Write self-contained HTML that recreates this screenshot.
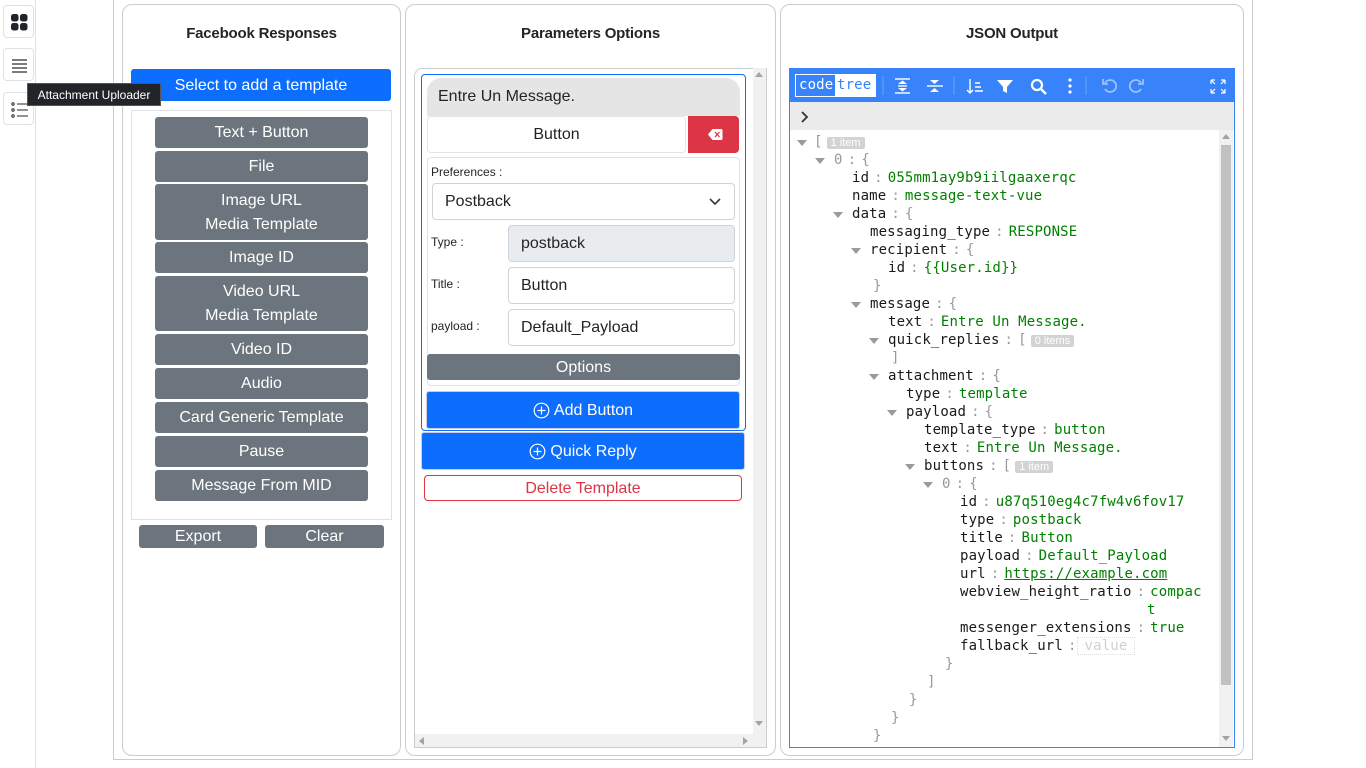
<!DOCTYPE html>
<html><head><meta charset="utf-8"><style>
*{box-sizing:border-box;margin:0;padding:0}
body{width:1366px;height:768px;background:#fff;font-family:"Liberation Sans",sans-serif;position:relative;overflow:hidden;color:#212529}
.a{position:absolute}
.side{left:0;top:0;width:36px;height:768px;border-right:1px solid #dee2e6}
.sb{left:3px;width:31px;height:33px;border:1px solid #dee2e6;border-radius:4px;background:#fff}
.panel{border:1px solid #ccc;border-radius:10px;top:4px;height:752px}
.h{font-weight:bold;font-size:15px;text-align:center;width:100%;top:20px;letter-spacing:-0.2px}
.gb{background:#6c757d;color:#fff;border-radius:3px;font-size:16px;text-align:center;display:flex;align-items:center;justify-content:center;flex-direction:column;line-height:24px;padding-top:1px}
.bb{background:#0d6efd;color:#fff;border-radius:3px;font-size:16px;display:flex;align-items:center;justify-content:center;padding-top:1px}
.in{border:1px solid #ced4da;border-radius:4px;font-size:16px;padding-left:12px;display:flex;align-items:center;background:#fff;padding-top:1px}
.lb{font-size:12px}
.j{font-family:"DejaVu Sans Mono",monospace;font-size:14px;line-height:18px;height:18px;white-space:pre;letter-spacing:0.15px}
.k{color:#1a1a1a}.v{color:#008000}.c{color:#999;padding:0 5px}.g{color:#999}
.t{display:inline-block;width:0;height:0;border-left:5px solid transparent;border-right:5px solid transparent;border-top:6px solid #9a9a9a}
.badge{background:#d3d3d3;color:#fff;font-family:"Liberation Sans",sans-serif;font-size:11px;padding:0 4px;border-radius:2px;margin-left:4px;letter-spacing:0}
</style></head><body>
<div class="a side"></div>
<div class="a sb" style="top:5px"><svg width="31" height="33" viewBox="0 0 31 33"><rect x="7" y="8" width="7.5" height="7.5" rx="2.5" fill="#212529"/><rect x="16" y="8" width="7.5" height="7.5" rx="2.5" fill="#212529"/><rect x="7" y="17" width="7.5" height="7.5" rx="2.5" fill="#212529"/><rect x="16" y="17" width="7.5" height="7.5" rx="2.5" fill="#212529"/></svg></div>
<div class="a sb" style="top:48px"><svg width="31" height="33"><g stroke="#212529" stroke-width="1.2"><line x1="8" y1="11" x2="23" y2="11"/><line x1="8" y1="15" x2="23" y2="15"/><line x1="8" y1="19" x2="23" y2="19"/><line x1="8" y1="23" x2="23" y2="23"/></g></svg></div>
<div class="a sb" style="top:92px"><svg width="31" height="33"><g stroke="#212529" stroke-width="1" fill="none"><circle cx="9" cy="11" r="1.2"/><circle cx="9" cy="17" r="1.2"/><circle cx="9" cy="23" r="1.2"/><line x1="13" y1="11" x2="24" y2="11"/><line x1="13" y1="17" x2="24" y2="17"/><line x1="13" y1="23" x2="24" y2="23"/></g></svg></div>
<div class="a" style="left:113px;top:0;width:1140px;height:760px;border:1px solid #ccc;border-top:none"></div>

<!-- left panel -->
<div class="a panel" style="left:122px;width:279px"><div class="a h">Facebook Responses</div></div>
<div class="a bb" style="left:131px;top:69px;width:260px;height:32px">Select to add a template</div>
<div class="a" style="left:131px;top:110px;width:261px;height:410px;border:1px solid #dee2e6"></div>
<div class="a gb" style="left:155px;top:117px;width:213px;height:31px">Text + Button</div>
<div class="a gb" style="left:155px;top:151px;width:213px;height:31px">File</div>
<div class="a gb" style="left:155px;top:184px;width:213px;height:56px">Image URL<br>Media Template</div>
<div class="a gb" style="left:155px;top:242px;width:213px;height:31px">Image ID</div>
<div class="a gb" style="left:155px;top:276px;width:213px;height:55px">Video URL<br>Media Template</div>
<div class="a gb" style="left:155px;top:334px;width:213px;height:31px">Video ID</div>
<div class="a gb" style="left:155px;top:368px;width:213px;height:31px">Audio</div>
<div class="a gb" style="left:155px;top:402px;width:213px;height:31px">Card Generic Template</div>
<div class="a gb" style="left:155px;top:436px;width:213px;height:31px">Pause</div>
<div class="a gb" style="left:155px;top:470px;width:213px;height:31px">Message From MID</div>
<div class="a gb" style="left:139px;top:525px;width:118px;height:23px">Export</div>
<div class="a gb" style="left:265px;top:525px;width:119px;height:23px">Clear</div>

<!-- middle panel -->
<div class="a panel" style="left:405px;width:371px"><div class="a h">Parameters Options</div></div>
<div class="a" style="left:414px;top:68px;width:353px;height:680px;border:1px solid #ccc;border-radius:8px 0 0 0"></div>
<div class="a" style="left:753px;top:68px;width:13px;height:679px;background:#f1f1f1"></div>
<div class="a" style="left:755px;top:72px;border-left:4px solid transparent;border-right:4px solid transparent;border-bottom:5px solid #a3a3a3"></div>
<div class="a" style="left:755px;top:721px;border-left:4px solid transparent;border-right:4px solid transparent;border-top:5px solid #a3a3a3"></div>
<div class="a" style="left:415px;top:734px;width:338px;height:13px;background:#f1f1f1"></div>
<div class="a" style="left:419px;top:737px;border-top:4px solid transparent;border-bottom:4px solid transparent;border-right:5px solid #a3a3a3"></div>
<div class="a" style="left:743px;top:737px;border-top:4px solid transparent;border-bottom:4px solid transparent;border-left:5px solid #a3a3a3"></div>
<div class="a" style="left:421px;top:74px;width:325px;height:357px;border:1px solid #0d6efd;border-radius:4px"></div>
<div class="a" style="left:427px;top:78px;width:313px;height:38px;background:#e5e5e5;border-radius:14px 14px 0 0;font-size:16px;padding:10px 0 0 11px">Entre Un Message.</div>
<div class="a in" style="left:427px;top:116px;width:259px;height:37px;justify-content:center;padding:0;border-color:#e5e5e5">Button</div>
<div class="a" style="left:688px;top:116px;width:51px;height:37px;background:#dc3545;border-radius:0 4px 4px 0"><svg width="51" height="37"><path d="M20 18.5 L24.5 13 H33 a1.5 1.5 0 0 1 1.5 1.5 V22.5 a1.5 1.5 0 0 1 -1.5 1.5 H24.5 Z" fill="#fff"/><path d="M27 16 l4.5 5 M31.5 16 l-4.5 5" stroke="#dc3545" stroke-width="1.3"/></svg></div>
<div class="a" style="left:427px;top:157px;width:313px;height:229px;border:1px solid #dee2e6;border-radius:4px"></div>
<div class="a lb" style="left:431px;top:165px">Preferences :</div>
<div class="a in" style="left:432px;top:183px;width:303px;height:37px">Postback<svg class="a" style="left:276px;top:13px" width="12" height="10"><path d="M1 2 L6 7 L11 2" stroke="#343a40" stroke-width="1.6" fill="none"/></svg></div>
<div class="a lb" style="left:431px;top:235px">Type :</div>
<div class="a in" style="left:508px;top:225px;width:227px;height:37px;background:#e9ecef">postback</div>
<div class="a lb" style="left:431px;top:277px">Title :</div>
<div class="a in" style="left:508px;top:267px;width:227px;height:37px">Button</div>
<div class="a lb" style="left:431px;top:319px">payload :</div>
<div class="a in" style="left:508px;top:309px;width:227px;height:37px">Default_Payload</div>
<div class="a gb" style="left:427px;top:354px;width:313px;height:26px">Options</div>
<div class="a bb" style="left:426px;top:391px;width:314px;height:38px;border:1px solid #ccd">
<svg width="17" height="17" style="margin-right:4px"><circle cx="8.5" cy="8.5" r="7.3" stroke="#fff" stroke-width="1.2" fill="none"/><path d="M8.5 4.5v8M4.5 8.5h8" stroke="#fff" stroke-width="1.2"/></svg>Add Button</div>
<div class="a bb" style="left:421px;top:432px;width:324px;height:38px;border:1px solid #ccd">
<svg width="17" height="17" style="margin-right:4px"><circle cx="8.5" cy="8.5" r="7.3" stroke="#fff" stroke-width="1.2" fill="none"/><path d="M8.5 4.5v8M4.5 8.5h8" stroke="#fff" stroke-width="1.2"/></svg>Quick Reply</div>
<div class="a" style="left:424px;top:475px;width:318px;height:26px;border:1px solid #dc3545;border-radius:4px;color:#dc3545;font-size:16px;text-align:center;line-height:25px">Delete Template</div>

<!-- right panel -->
<div class="a panel" style="left:780px;width:464px"><div class="a h">JSON Output</div></div>
<div class="a" style="left:789px;top:68px;width:446px;height:680px;border:1px solid #3883fa"></div>
<div class="a" style="left:790px;top:69px;width:444px;height:33px;background:#3883fa"></div>
<div class="a" style="left:795px;top:74px;width:81px;height:23px;background:#fff;border:1px solid #fff"></div>
<div class="a j" style="left:796px;top:75px;width:39px;height:21px;background:#3883fa;color:#fff;line-height:21px;padding-left:3px">code</div>
<div class="a j" style="left:837px;top:75px;color:#3883fa;line-height:21px">tree</div>
<svg class="a" style="left:880px;top:69px" width="354" height="33"><g stroke="#fff" fill="#fff" stroke-width="1.4">
<line x1="3" y1="7" x2="3" y2="26" stroke="#5a9bfb"/><line x1="74" y1="7" x2="74" y2="26" stroke="#5a9bfb"/><line x1="206" y1="7" x2="206" y2="26" stroke="#5a9bfb"/>
<line x1="15" y1="10" x2="30" y2="10"/><line x1="15" y1="24" x2="30" y2="24"/><path d="M18 15 l4.5-3.5 l4.5 3.5z M18 19 l4.5 3.5 l4.5-3.5z" stroke="none"/><line x1="18" y1="17" x2="27" y2="17"/>
<line x1="47" y1="17" x2="63" y2="17"/><path d="M50 11 h9 l-4.5 4z M50 23 h9 l-4.5 -4z" stroke="none"/>
<path d="M90 10v14 M87 21l3 3 3-3" fill="none"/><path d="M95 14h5 M95 18h6 M95 22h8" fill="none"/>
<path d="M117 11 h16 l-6 7 v6 l-4 -2 v-4z" stroke="none"/>
<circle cx="157" cy="16" r="5" fill="none" stroke-width="2.2"/><line x1="161" y1="20" x2="166" y2="25" stroke-width="2.5"/>
<circle cx="190" cy="11" r="1.6" stroke="none"/><circle cx="190" cy="17" r="1.6" stroke="none"/><circle cx="190" cy="23" r="1.6" stroke="none"/>
<g stroke="#9dc1fc" fill="none" stroke-width="1.8"><path d="M225 14 a6 6 0 1 1 0 6"/><path d="M223 10 v5 h5"/><path d="M261 14 a6 6 0 1 0 0 6"/><path d="M263 10 v5 h-5"/></g>
<g fill="none" stroke-width="1.2"><path d="M331 11 l4 4 M331 11 h4 M331 11 v4 M345 11 l-4 4 M345 11 h-4 M345 11 v4 M331 24 l4-4 M331 24 h4 M331 24 v-4 M345 24 l-4-4 M345 24 h-4 M345 24 v-4"/></g>
</g></svg>
<div class="a" style="left:790px;top:102px;width:444px;height:28px;background:#ebebeb"></div>
<svg class="a" style="left:800px;top:110px" width="10" height="14"><path d="M2 2 L7 7 L2 12" stroke="#333" stroke-width="1.8" fill="none"/></svg>
<div class="a" style="left:1219px;top:130px;width:14px;height:617px;background:#f1f1f1"></div>
<div class="a" style="left:1221px;top:145px;width:10px;height:540px;background:#c1c1c1"></div>
<div class="a" style="left:1222px;top:134px;border-left:4px solid transparent;border-right:4px solid transparent;border-bottom:5px solid #a3a3a3"></div>
<div class="a" style="left:1222px;top:736px;border-left:4px solid transparent;border-right:4px solid transparent;border-top:5px solid #a3a3a3"></div>

<div class="a t" style="left:797px;top:140px"></div><div class="a j g" style="left:814px;top:133px">[<span class="badge">1 item</span></div>
<div class="a t" style="left:815px;top:158px"></div><div class="a j g" style="left:834px;top:151px">0<span class="c">:</span>{</div>
<div class="a j" style="left:852px;top:169px"><span class="k">id</span><span class="c">:</span><span class="v">055mm1ay9b9iilgaaxerqc</span></div>
<div class="a j" style="left:852px;top:187px"><span class="k">name</span><span class="c">:</span><span class="v">message-text-vue</span></div>
<div class="a t" style="left:833px;top:212px"></div><div class="a j" style="left:852px;top:205px"><span class="k">data</span><span class="c">:</span><span class="g">{</span></div>
<div class="a j" style="left:870px;top:223px"><span class="k">messaging_type</span><span class="c">:</span><span class="v">RESPONSE</span></div>
<div class="a t" style="left:851px;top:248px"></div><div class="a j" style="left:870px;top:241px"><span class="k">recipient</span><span class="c">:</span><span class="g">{</span></div>
<div class="a j" style="left:888px;top:259px"><span class="k">id</span><span class="c">:</span><span class="v">{{User.id}}</span></div>
<div class="a j g" style="left:873px;top:277px">}</div>
<div class="a t" style="left:851px;top:302px"></div><div class="a j" style="left:870px;top:295px"><span class="k">message</span><span class="c">:</span><span class="g">{</span></div>
<div class="a j" style="left:888px;top:313px"><span class="k">text</span><span class="c">:</span><span class="v">Entre Un Message.</span></div>
<div class="a t" style="left:869px;top:338px"></div><div class="a j" style="left:888px;top:331px"><span class="k">quick_replies</span><span class="c">:</span><span class="g">[<span class="badge">0 items</span></span></div>
<div class="a j g" style="left:891px;top:349px">]</div>
<div class="a t" style="left:869px;top:374px"></div><div class="a j" style="left:888px;top:367px"><span class="k">attachment</span><span class="c">:</span><span class="g">{</span></div>
<div class="a j" style="left:906px;top:385px"><span class="k">type</span><span class="c">:</span><span class="v">template</span></div>
<div class="a t" style="left:887px;top:410px"></div><div class="a j" style="left:906px;top:403px"><span class="k">payload</span><span class="c">:</span><span class="g">{</span></div>
<div class="a j" style="left:924px;top:421px"><span class="k">template_type</span><span class="c">:</span><span class="v">button</span></div>
<div class="a j" style="left:924px;top:439px"><span class="k">text</span><span class="c">:</span><span class="v">Entre Un Message.</span></div>
<div class="a t" style="left:905px;top:464px"></div><div class="a j" style="left:924px;top:457px"><span class="k">buttons</span><span class="c">:</span><span class="g">[<span class="badge">1 item</span></span></div>
<div class="a t" style="left:923px;top:482px"></div><div class="a j g" style="left:942px;top:475px">0<span class="c">:</span>{</div>
<div class="a j" style="left:960px;top:493px"><span class="k">id</span><span class="c">:</span><span class="v">u87q510eg4c7fw4v6fov17</span></div>
<div class="a j" style="left:960px;top:511px"><span class="k">type</span><span class="c">:</span><span class="v">postback</span></div>
<div class="a j" style="left:960px;top:529px"><span class="k">title</span><span class="c">:</span><span class="v">Button</span></div>
<div class="a j" style="left:960px;top:547px"><span class="k">payload</span><span class="c">:</span><span class="v">Default_Payload</span></div>
<div class="a j" style="left:960px;top:565px"><span class="k">url</span><span class="c">:</span><span class="v" style="text-decoration:underline">https://example.com</span></div>
<div class="a j" style="left:960px;top:583px"><span class="k">webview_height_ratio</span><span class="c">:</span><span class="v">compac</span></div>
<div class="a j v" style="left:1147px;top:601px">t</div>
<div class="a j" style="left:960px;top:619px"><span class="k">messenger_extensions</span><span class="c">:</span><span class="v">true</span></div>
<div class="a j" style="left:960px;top:637px"><span class="k">fallback_url</span><span class="c" style="padding-right:0">:</span><span style="color:#d0d0d0;border:1px dotted #ddd;padding:0 7px">value</span></div>
<div class="a j g" style="left:945px;top:655px">}</div>
<div class="a j g" style="left:927px;top:673px">]</div>
<div class="a j g" style="left:909px;top:691px">}</div>
<div class="a j g" style="left:891px;top:709px">}</div>
<div class="a j g" style="left:873px;top:727px">}</div>

<!-- tooltip -->
<div class="a" style="left:27px;top:83px;width:134px;height:23px;background:#212529;color:#fff;font-size:12px;line-height:23px;text-align:center;border:1px solid #555">Attachment Uploader</div>
</body></html>
